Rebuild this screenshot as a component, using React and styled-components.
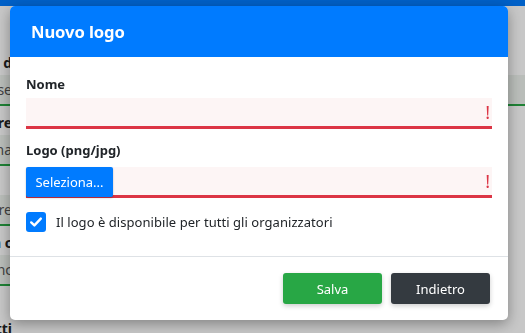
import React from "react";
import styled, { createGlobalStyle } from "styled-components";

const Global = createGlobalStyle`
  html, body { margin: 0; padding: 0; }
  body {
    font-family: "Noto Sans", "Open Sans", sans-serif;
    background: #ffffff;
    overflow: hidden;
  }
  * { box-sizing: border-box; }
`;

const Page = styled.div`
  width: 525px;
  height: 333px;
  display: flex;
  flex-direction: column;
  background: #ffffff;
  overflow: hidden;
`;

const NavBar = styled.div`
  height: 6px;
  background: #007bff;
  flex: none;
`;

const PageBody = styled.div`
  flex: 1;
  min-height: 0;
  display: flex;
  justify-content: space-between;
  overflow: hidden;
`;

const Column = styled.div`
  width: ${(p) => p.$w}px;
  overflow: hidden;
  display: flex;
  flex-direction: column;
  padding-top: 49px;
`;

const BgLabel = styled.div`
  height: 16px;
  margin-bottom: 4px;
  margin-top: ${(p) => p.$mt || 0}px;
  display: flex;
  justify-content: flex-end;
  white-space: nowrap;
  font-size: 14px;
  font-weight: 700;
  line-height: 16px;
  color: #222;
  flex: none;
`;

const BgField = styled.div`
  height: 31px;
  margin-bottom: 9px;
  display: flex;
  justify-content: flex-end;
  align-items: center;
  white-space: nowrap;
  font-size: 14px;
  color: #555;
  flex: none;
  background: ${(p) => (p.$on ? "#eef3ee" : "transparent")};
  border-bottom: 2px solid ${(p) => (p.$on ? "#28a745" : "transparent")};
`;

const Backdrop = styled.div`
  position: fixed;
  inset: 0;
  background: rgba(0, 0, 0, 0.22);
`;

const Modal = styled.div`
  position: fixed;
  left: 10px;
  top: 6px;
  width: 498px;
  height: 314px;
  background: #ffffff;
  border-radius: 5px;
  display: flex;
  flex-direction: column;
  box-shadow: 0 4px 14px rgba(0, 0, 0, 0.35);
  overflow: hidden;
`;

const Header = styled.div`
  height: 51px;
  background: #007bff;
  display: flex;
  align-items: center;
  padding: 0 21px;
  flex: none;
`;

const Title = styled.h5`
  margin: 0;
  color: #ffffff;
  font-size: 16.6px;
  font-weight: 700;
  letter-spacing: -0.1px;
`;

const Body = styled.div`
  padding: 19px 16px 24px;
  display: flex;
  flex-direction: column;
  border-bottom: 1px solid #dee2e6;
`;

const Label = styled.label`
  font-size: 13px;
  font-weight: 700;
  line-height: 16px;
  color: #212529;
  margin-bottom: ${(p) => p.$mb}px;
`;

const Field = styled.div`
  height: 31px;
  display: flex;
  align-items: stretch;
  background: #fdf5f5;
  border-bottom: 3px solid #dc3545;
  margin-bottom: ${(p) => p.$mb}px;
`;

const Input = styled.input`
  flex: 1;
  min-width: 0;
  border: 0;
  outline: none;
  background: transparent;
  font: inherit;
  font-size: 13px;
  padding: 0 8px;
`;

const Mark = styled.span`
  color: #dc3545;
  font-size: 18px;
  line-height: 28px;
  padding: 0 2px 0 4px;
  font-family: "Noto Sans", sans-serif;
  font-weight: 400;
`;

const FileButton = styled.button`
  flex: none;
  width: 87px;
  height: 30px;
  margin-bottom: -3px;
  border: 0;
  border-radius: 2px;
  background: #007bff;
  color: #ffffff;
  font-family: inherit;
  font-size: 13px;
  padding: 0;
  box-shadow: 0 1px 2px rgba(0, 0, 0, 0.25);
`;

const CheckRow = styled.label`
  display: flex;
  align-items: center;
  gap: 10px;
  font-size: 13px;
  color: #212529;
  letter-spacing: 0.05px;
`;

const Box = styled.span`
  width: 20px;
  height: 20px;
  border-radius: 3px;
  background: #007bff;
  display: flex;
  align-items: center;
  justify-content: center;
  flex: none;
`;

const Footer = styled.div`
  display: flex;
  justify-content: flex-end;
  gap: 9px;
  padding: 16px 18px 16px;
`;

const Button = styled.button`
  width: 99px;
  height: 31px;
  border: 0;
  border-radius: 3px;
  color: #ffffff;
  font-family: inherit;
  font-size: 13px;
  background: ${(p) => p.$bg};
  box-shadow: 0 2px 5px rgba(0, 0, 0, 0.2);
`;

export default function App() {
  return (
    <>
      <Global />
      <Page>
        <NavBar />
        <PageBody>
          <Column $w={12}>
            <BgLabel>Campo d</BgLabel>
            <BgField $on>Base</BgField>
            <BgLabel>Colore</BgLabel>
            <BgField $on>Nome una</BgField>
            <BgLabel></BgLabel>
            <BgField $on>Colore</BgField>
            <BgLabel>Data c</BgLabel>
            <BgField $on>Nessuno nc</BgField>
            <BgLabel $mt={26}>Tutti</BgLabel>
          </Column>
          <Column $w={17}>
            <BgLabel></BgLabel>
            <BgField $on></BgField>
          </Column>
        </PageBody>
      </Page>
      <Backdrop />
      <Modal>
        <Header>
          <Title>Nuovo logo</Title>
        </Header>
        <Body>
          <Label $mb={6}>Nome</Label>
          <Field $mb={13}>
            <Input />
            <Mark>!</Mark>
          </Field>
          <Label $mb={9}>Logo (png/jpg)</Label>
          <Field $mb={14}>
            <FileButton>Seleziona...</FileButton>
            <Input />
            <Mark>!</Mark>
          </Field>
          <CheckRow>
            <Box>
              <svg width="14" height="14" viewBox="0 0 14 14">
                <path
                  d="M2.2 7.4 L5.4 10.4 L11.8 3.6"
                  fill="none"
                  stroke="#fff"
                  strokeWidth="2.4"
                  strokeLinecap="round"
                  strokeLinejoin="round"
                />
              </svg>
            </Box>
            Il logo è disponibile per tutti gli organizzatori
          </CheckRow>
        </Body>
        <Footer>
          <Button $bg="#28a745">Salva</Button>
          <Button $bg="#343a40">Indietro</Button>
        </Footer>
      </Modal>
    </>
  );
}
